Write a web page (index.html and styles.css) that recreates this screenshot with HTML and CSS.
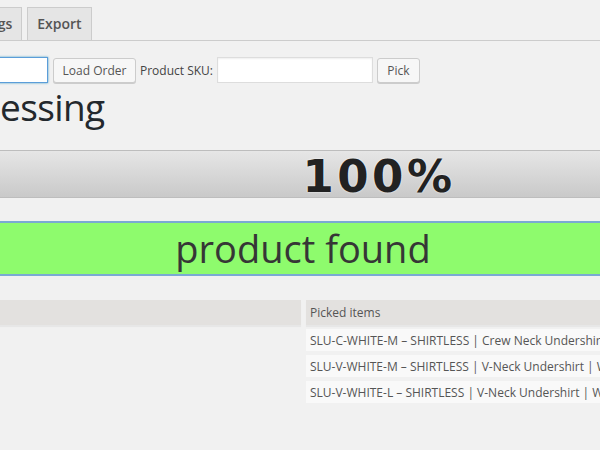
FILE: index.html
```html
<!DOCTYPE html>
<html>
<head>
<meta charset="utf-8">
<link rel="stylesheet" href="styles.css">
</head>
<body>
<div class="wrap">
  <nav class="tabs">
    <a class="tab">Settings</a>
    <a class="tab">Export</a>
  </nav>
  <div class="toolbar">
    <input class="field order" type="text" value="">
    <button class="btn load">Load Order</button>
    <label class="lbl">Product SKU:</label>
    <input class="field sku" type="text" value="">
    <button class="btn pick">Pick</button>
  </div>
  <h1 class="title">Processing</h1>
  <div class="progress"><span class="pct">100%</span></div>
  <div class="status">product found</div>
  <table class="items">
    <thead>
      <tr><th class="col-left"></th><th class="col-right">Picked items</th></tr>
    </thead>
    <tbody>
      <tr><td class="empty"></td><td class="item">SLU-C-WHITE-M – SHIRTLESS | Crew Neck Undershirt | White | M</td></tr>
      <tr><td class="empty"></td><td class="item">SLU-V-WHITE-M – SHIRTLESS | V-Neck Undershirt | White | M</td></tr>
      <tr><td class="empty"></td><td class="item">SLU-V-WHITE-L – SHIRTLESS | V-Neck Undershirt | White | L</td></tr>
    </tbody>
  </table>
</div>
</body>
</html>
```
FILE: styles.css
```css
html, body {
  margin: 0;
  padding: 0;
  width: 600px;
  height: 450px;
  overflow: hidden;
  background: #f1f1f1;
  font-family: "Open Sans", "Noto Sans", sans-serif;
  color: #444;
}
.wrap {
  margin-left: -120px;
  width: 860px;
}
.tabs {
  display: flex;
  align-items: flex-end;
  gap: 5px;
  padding: 7px 0 0 68px;
  border-bottom: 1px solid #ccc;
}
.tab {
  display: block;
  padding: 4px 9px;
  font-size: 14px;
  font-weight: 600;
  line-height: 24px;
  color: #555;
  background: #e5e5e5;
  border: 1px solid #ccc;
  border-bottom: none;
}
.toolbar {
  display: flex;
  align-items: center;
  gap: 4px;
  padding: 16px 0 0 18px;
}
.field {
  height: 26px;
  box-sizing: border-box;
  border: 1px solid #ddd;
  background: #fff;
  box-shadow: inset 0 1px 2px rgba(0,0,0,0.07);
  margin: 0;
  padding: 3px 5px;
}
.order {
  width: 150px;
  border-color: #5b9dd9;
  box-shadow: 0 0 2px rgba(30,140,190,0.8);
  margin-right: 1px;
}
.sku { width: 156px; }
.btn {
  height: 25px;
  box-sizing: border-box;
  padding: 0 5px;
  margin: 0;
  font-family: "Open Sans", "Noto Sans", sans-serif;
  font-size: 12px;
  white-space: nowrap;
  color: #555;
  background: #f7f7f7;
  border: 1px solid #ccc;
  border-radius: 3px;
  box-shadow: 0 1px 0 #ccc;
}
.load { width: 83px; }
.pick { width: 43px; }
.lbl {
  font-size: 12px;
  color: #444;
  white-space: nowrap;
}
.title {
  margin: 2px 0 0 45px;
  font-size: 37px;
  letter-spacing: -0.6px;
  font-weight: 400;
  line-height: 44px;
  color: #23282d;
}
.progress {
  margin-top: 21px;
  height: 48px;
  box-sizing: border-box;
  border-top: 1px solid #bdbdbd;
  border-bottom: 1px solid #bdbdbd;
  background: linear-gradient(#e6e6e6, #d9d9d9 45%, #c9c9c9);
  text-align: center;
  padding-left: 138px;
}
.pct {
  font-family: "DejaVu Sans", Verdana, sans-serif;
  font-weight: bold;
  font-size: 45px;
  letter-spacing: 3.5px;
  line-height: 52px;
  color: #222;
  text-shadow: 0 0 2px #fff;
}
.status {
  margin-top: 23px;
  height: 55px;
  box-sizing: border-box;
  border-top: 2px solid #7aa9d3;
  border-bottom: 2px solid #7aa9d3;
  background: #8efb6d;
  text-align: center;
  padding-right: 14px;
  font-size: 38px;
  line-height: 50px;
  color: #363636;
}
.items {
  margin-top: 20px;
  border-spacing: 5px 4px;
  margin-left: -5px;
  width: 860px;
  table-layout: fixed;
}
.col-left, .col-right {
  background: #e3e1df;
  height: 25px;
  box-shadow: 0 2px 1px rgba(0,0,0,0.04);
  padding: 0 4px;
  text-align: left;
  font-weight: 400;
  font-size: 12px;
  color: #555;
}
.col-left { width: 413px; }
.item {
  background: #f9f9f9;
  height: 22px;
  padding: 0 4px;
  font-size: 12px;
  color: #555;
  white-space: nowrap;
  overflow: hidden;
}
.empty { padding: 0; }
```
